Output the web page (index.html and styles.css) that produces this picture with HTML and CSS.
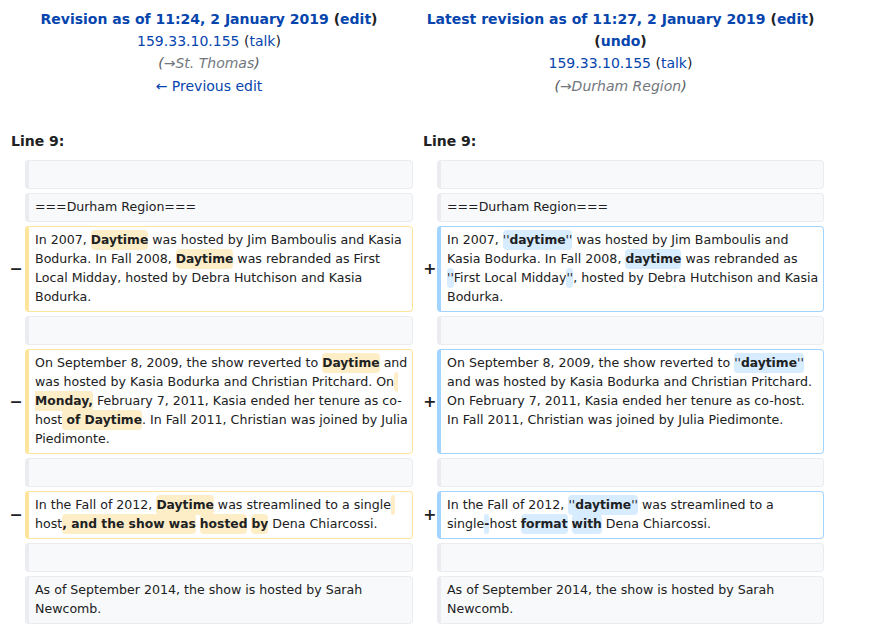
FILE: index.html
```html
<!DOCTYPE html>
<html lang="en">
<head>
<meta charset="utf-8">
<title>Difference between revisions</title>
<link rel="stylesheet" href="styles.css">
</head>
<body>
<div class="diff">
  <div class="title"><strong><a href="#">Revision as of 11:24, 2 January 2019</a> (<a href="#">edit</a>)</strong><br><a href="#">159.33.10.155</a> (<a href="#">talk</a>)<br><span class="comment">(<span class="auto">→St. Thomas</span>)</span><br><a href="#">← Previous edit</a></div>
  <div class="title"><strong><a href="#">Latest revision as of 11:27, 2 January 2019</a> (<a href="#">edit</a>) (<a href="#">undo</a>)</strong><br><a href="#">159.33.10.155</a> (<a href="#">talk</a>)<br><span class="comment">(<span class="auto">→Durham Region</span>)</span></div>

  <div class="lineno">Line 9:</div>
  <div class="lineno">Line 9:</div>

  <div class="marker m-old"></div><div class="cell ctx">&nbsp;</div><div class="marker m-new"></div><div class="cell ctx">&nbsp;</div>

  <div class="marker m-old"></div><div class="cell ctx">===Durham Region===</div><div class="marker m-new"></div><div class="cell ctx">===Durham Region===</div>

  <div class="marker m-old">−</div><div class="cell del">In 2007, <span class="chg">Daytime</span> was hosted by Jim Bamboulis and Kasia Bodurka. In Fall 2008, <span class="chg">Daytime</span> was rebranded as First Local Midday, hosted by Debra Hutchison and Kasia Bodurka.</div><div class="marker m-new">+</div><div class="cell add">In 2007, <span class="chg"><span class="q">''</span>daytime<span class="q">''</span></span> was hosted by Jim Bamboulis and Kasia Bodurka. In Fall 2008, <span class="chg">daytime</span> was rebranded as <span class="chg"><span class="q">''</span></span>First Local Midday<span class="chg"><span class="q">''</span></span>, hosted by Debra Hutchison and Kasia Bodurka.</div>

  <div class="marker m-old"></div><div class="cell ctx">&nbsp;</div><div class="marker m-new"></div><div class="cell ctx">&nbsp;</div>

  <div class="marker m-old">−</div><div class="cell del">On September 8, 2009, the show reverted to <span class="chg">Daytime</span> and was hosted by Kasia Bodurka and Christian Pritchard. On<span class="chg"> Monday,</span> February 7, 2011, Kasia ended her tenure as co-host<span class="chg"> of Daytime</span>. In Fall 2011, Christian was joined by Julia Piedimonte.</div><div class="marker m-new">+</div><div class="cell add">On September 8, 2009, the show reverted to <span class="chg"><span class="q">''</span>daytime<span class="q">''</span></span> and was hosted by Kasia Bodurka and Christian Pritchard. On February 7, 2011, Kasia ended her tenure as co-host. In Fall 2011, Christian was joined by Julia Piedimonte.</div>

  <div class="marker m-old"></div><div class="cell ctx">&nbsp;</div><div class="marker m-new"></div><div class="cell ctx">&nbsp;</div>

  <div class="marker m-old">−</div><div class="cell del">In the Fall of 2012, <span class="chg">Daytime</span> was streamlined to a single<span class="chg"> </span>host<span class="chg">, and the show was</span> <span class="chg">hosted</span> <span class="chg">by</span> Dena Chiarcossi.</div><div class="marker m-new">+</div><div class="cell add">In the Fall of 2012, <span class="chg"><span class="q">''</span>daytime<span class="q">''</span></span> was streamlined to a single<span class="chg">-</span>host <span class="chg">format</span> <span class="chg">with</span> Dena Chiarcossi.</div>

  <div class="marker m-old"></div><div class="cell ctx">&nbsp;</div><div class="marker m-new"></div><div class="cell ctx">&nbsp;</div>

  <div class="marker m-old"></div><div class="cell ctx">As of September 2014, the show is hosted by Sarah Newcomb.</div><div class="marker m-new"></div><div class="cell ctx">As of September 2014, the show is hosted by Sarah Newcomb.</div>
</div>
</body>
</html>
```

FILE: styles.css
```css
body {
  margin: 0;
  font-family: "DejaVu Sans", sans-serif;
  color: #202122;
  background: #ffffff;
}

a {
  color: #0645ad;
  text-decoration: none;
}

.diff {
  display: grid;
  grid-template-columns: 16px 388px 16px 387px;
  column-gap: 4px;
  row-gap: 4px;
  padding: 8px 0 0 5px;
}

.title {
  grid-column: span 2;
  text-align: center;
  font-size: 14px;
  line-height: 22.2px;
}

.comment {
  font-style: italic;
  color: #54595d;
}

.comment .auto {
  color: #72777d;
}

.lineno {
  grid-column: span 2;
  font-size: 14px;
  font-weight: bold;
  line-height: 22.4px;
  margin-top: 29.5px;
  padding: 0 0 3.1px 6px;
}

.marker {
  display: flex;
  align-items: center;
  justify-content: flex-end;
  font-size: 15.75px;
  font-weight: bold;
}

.m-old {
  margin-right: -1.5px;
}

.m-new {
  margin-right: -3.5px;
}

.cell {
  font-size: 12.6px;
  line-height: 19px;
  border: 1px solid;
  border-left-width: 4px;
  border-radius: 4px;
  padding: 3px 4px 5px 6px;
  white-space: pre-wrap;
  overflow-wrap: break-word;
}

.ctx {
  background: #f8f9fa;
  border-color: #eaecf0;
}

.del {
  background: #ffffff;
  border-color: #ffe49c;
}

.add {
  background: #ffffff;
  border-color: #a3d3ff;
}

.chg {
  font-size: 0.978em;
  line-height: 12px;
  font-weight: bold;
  border-radius: 4px;
  padding: 3px 0;
}

.chg .q {
  font-weight: normal;
}

.del .chg {
  background: #feeec8;
}

.add .chg {
  background: #d8ecff;
}
```
